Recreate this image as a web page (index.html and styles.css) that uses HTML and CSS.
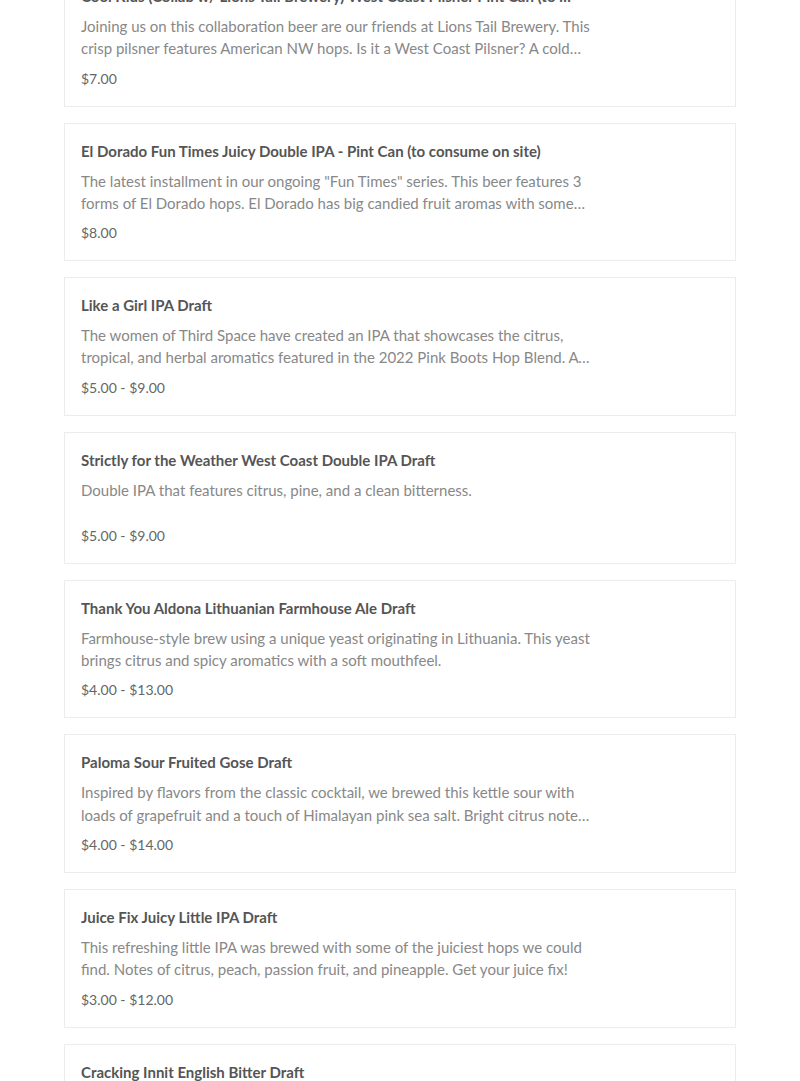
FILE: index.html
```html
<!DOCTYPE html>
<html lang="en">
<head>
<meta charset="utf-8">
<title>Menu</title>
<link rel="stylesheet" href="styles.css">
</head>
<body>
<div class="list">
  <div class="card">
    <div class="title">Cool Kids (Collab w/ Lions Tail Brewery) West Coast Pilsner Pint Can (to consume on site)</div>
    <div class="desc">Joining us on this collaboration beer are our friends at Lions Tail Brewery. This crisp pilsner features American NW hops. Is it a West Coast Pilsner? A cold IPA? You decide.</div>
    <div class="price">$7.00</div>
  </div>
  <div class="card">
    <div class="title">El Dorado Fun Times Juicy Double IPA - Pint Can (to consume on site)</div>
    <div class="desc">The latest installment in our ongoing "Fun Times" series. This beer features 3 forms of El Dorado hops. El Dorado has big candied fruit aromas with some tropical notes.</div>
    <div class="price">$8.00</div>
  </div>
  <div class="card">
    <div class="title">Like a Girl IPA Draft</div>
    <div class="desc">The women of Third Space have created an IPA that showcases the citrus, tropical, and herbal aromatics featured in the 2022 Pink Boots Hop Blend. A portion of proceeds benefit the Pink Boots Society.</div>
    <div class="price">$5.00 - $9.00</div>
  </div>
  <div class="card">
    <div class="title">Strictly for the Weather West Coast Double IPA Draft</div>
    <div class="desc">Double IPA that features citrus, pine, and a clean bitterness.</div>
    <div class="price">$5.00 - $9.00</div>
  </div>
  <div class="card">
    <div class="title">Thank You Aldona Lithuanian Farmhouse Ale Draft</div>
    <div class="desc">Farmhouse-style brew using a unique yeast originating in Lithuania. This yeast brings citrus and spicy aromatics with a soft mouthfeel.</div>
    <div class="price">$4.00 - $13.00</div>
  </div>
  <div class="card">
    <div class="title">Paloma Sour Fruited Gose Draft</div>
    <div class="desc">Inspired by flavors from the classic cocktail, we brewed this kettle sour with loads of grapefruit and a touch of Himalayan pink sea salt. Bright citrus notes with a refreshing finish.</div>
    <div class="price">$4.00 - $14.00</div>
  </div>
  <div class="card">
    <div class="title">Juice Fix Juicy Little IPA Draft</div>
    <div class="desc">This refreshing little IPA was brewed with some of the juiciest hops we could find. Notes of citrus, peach, passion fruit, and pineapple. Get your juice fix!</div>
    <div class="price">$3.00 - $12.00</div>
  </div>
  <div class="card">
    <div class="title">Cracking Innit English Bitter Draft</div>
    <div class="desc">A classic English bitter with notes of biscuit and toffee, balanced by earthy English hops.</div>
    <div class="price">$4.00 - $10.00</div>
  </div>
</div>
</body>
</html>
```

FILE: styles.css
```css
html, body {
  margin: 0;
  padding: 0;
  background: #ffffff;
}
body {
  font-family: Lato, "Open Sans", sans-serif;
  overflow: hidden;
}
.list {
  width: 672px;
  margin: -32px auto 0;
  display: flex;
  flex-direction: column;
  gap: 16px;
}
.card {
  border: 1px solid #ececec;
  padding: 16px;
  display: flex;
  flex-direction: column;
  gap: 8px;
  box-sizing: border-box;
}
.title {
  width: 495px;
  font-size: 15px;
  font-weight: 700;
  line-height: 22px;
  color: #555555;
  white-space: nowrap;
  overflow: hidden;
  text-overflow: ellipsis;
}
.desc {
  width: 512px;
  font-size: 15px;
  line-height: 22.3px;
  color: #888888;
  min-height: 38px;
  display: -webkit-box;
  -webkit-line-clamp: 2;
  -webkit-box-orient: vertical;
  overflow: hidden;
}
.price {
  font-size: 14px;
  line-height: 22px;
  color: #666666;
}
```
